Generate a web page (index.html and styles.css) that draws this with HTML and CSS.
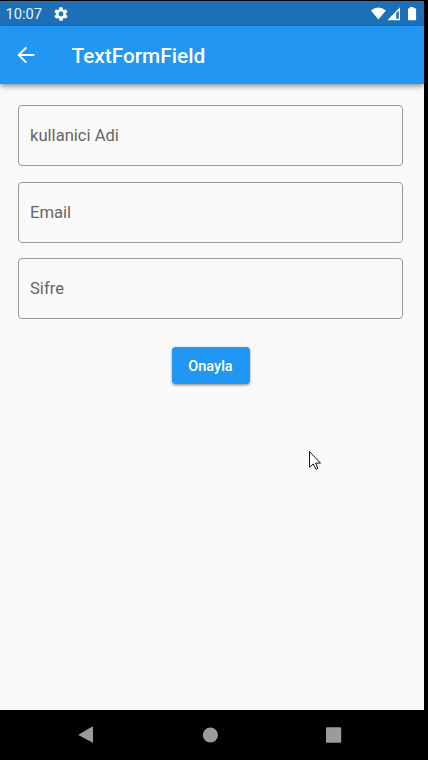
FILE: index.html
```html
<!DOCTYPE html>
<html lang="tr">
<head>
<meta charset="utf-8">
<title>TextFormField</title>
<link rel="stylesheet" href="styles.css">
</head>
<body>
<div class="device">
  <div class="screen">
    <div class="status">
      <span class="clock">10:07</span>
      <svg class="gear" width="16" height="16" viewBox="0 0 24 24"><path fill="#fff" fill-rule="evenodd" d="M19.4 13c0-.3.1-.6.1-1s0-.7-.1-1l2.100-1.600c.2-.2.3-.4.100-.600l-2-3.500c-.1-.2-.4-.3-.6-.2l-2.500 1c-.5-.4-1.100-.7-1.700-1L14.400 2.400c0-.2-.2-.4-.5-.4h-4c-.2 0-.4.2-.5.4L9 5.100c-.6.2-1.200.6-1.700 1l-2.500-1c-.2-.1-.5 0-.6.2l-2 3.500c-.1.2-.1.500.1.600L4.500 11c0 .3-.1.600-.1 1s0 .7.1 1l-2.100 1.600c-.2.200-.3.400-.1.600l2 3.500c.1.200.4.300.6.200l2.500-1c.5.400 1.100.7 1.700 1l.4 2.700c0 .2.200.4.500.4h4c.2 0 .5-.2.500-.4l.4-2.700c.6-.2 1.200-.6 1.700-1l2.500 1c.2.100.5 0 .6-.2l2-3.500c.1-.2.1-.5-.1-.6L19.400 13zM12 15.600a3.600 3.600 0 1 1 0-7.200 3.600 3.600 0 0 1 0 7.200z"/></svg>
      <svg class="signals" width="48" height="16" viewBox="0 0 48 16"><path fill="#fff" d="M0.900 4.500Q8.400 -1.500 15.900 4.500L8.400 13.500z"/><path fill="#fff" fill-rule="evenodd" d="M30 1.300V14.200H17.300zM28.800 4.500L26.200 7V12.800H28.800z"/><path fill="#fff" d="M39.900 1h3.700v1.300h1.800q.7 0 .7.700v10.500q0 .7-.7.700h-6.700q-.7 0-.7-.7V3q0-.7.700-.7h1.200z"/></svg>
    </div>
    <header class="appbar">
      <svg class="back" width="18" height="18" viewBox="0 0 18 18"><path fill="none" stroke="#fff" stroke-width="2" d="M17.400 9H2.200M9.300 1.400L1.700 9l7.600 7.600"/></svg>
      <h1 class="title">TextFormField</h1>
    </header>
    <main class="form">
      <div class="field"><span>kullanici Adi</span></div>
      <div class="field"><span>Email</span></div>
      <div class="field"><span>Sifre</span></div>
      <button class="submit">Onayla</button>
    </main>
  </div>
  <nav class="navbar">
    <svg width="16" height="18" viewBox="0 0 16 18"><path fill="#9b9b9b" d="M.8 8.400L14.300.600Q15 .400 15 1V16.400Q15 17 14.300 16.600L.8 9.200Q.3 8.800.8 8.400z"/></svg>
    <svg width="16" height="16" viewBox="0 0 16 16"><circle cx="8.400" cy="8" r="7.600" fill="#9b9b9b"/></svg>
    <svg width="16" height="16" viewBox="0 0 16 16"><rect x="0" y=".2" width="15.200" height="15.600" rx="1" fill="#9b9b9b"/></svg>
  </nav>
  <svg class="cursor" width="14" height="21" viewBox="0 0 14 21"><path fill="#fff" stroke="#111" stroke-width="1" d="M1.500 1.500V17.300L5.200 13.900L7.700 19Q9.300 19.600 9.800 18.200L7.600 13.100H12.500z"/></svg>
</div>
</body>
</html>
```

FILE: styles.css
```css
* {
  box-sizing: border-box;
}

body {
  margin: 0;
  background: #000;
  font-family: Roboto, "Liberation Sans", sans-serif;
}

.device {
  position: relative;
  display: flex;
  flex-direction: column;
  width: 428px;
  height: 760px;
  padding-top: 1px;
  overflow: hidden;
  background: #000;
}

.screen {
  display: flex;
  flex-direction: column;
  width: 424px;
  height: 709px;
  overflow: hidden;
  background: #fafafa;
}

.status {
  display: flex;
  align-items: center;
  flex: 0 0 25px;
  padding: 0 6px 0 5.500px;
  background: #1b70b7;
}

.clock {
  width: 47.500px;
  color: #e9f2fa;
  font-size: 14.700px;
  line-height: 24px;
  padding-top: 1px;
}

.signals {
  margin-left: auto;
}

.appbar {
  display: flex;
  align-items: center;
  flex: 0 0 58px;
  padding-left: 17px;
  background: #2196f3;
  box-shadow: 0 2px 4px rgba(0, 0, 0, .3), 0 4px 6px rgba(0, 0, 0, .13);
}

.title {
  margin: 2px 0 0 36.500px;
  color: #fff;
  font-size: 20.800px;
  font-weight: 500;
  line-height: 24px;
}

.form {
  display: flex;
  flex-direction: column;
  align-items: center;
  padding: 21px 21px 0 18px;
}

.field {
  display: flex;
  align-items: center;
  width: 385px;
  height: 61px;
  margin-bottom: 15.700px;
  padding: 0 11px;
  border: 1px solid #999;
  border-radius: 4px;
  color: #666;
  font-size: 16.600px;
}

.submit {
  width: 78px;
  height: 37px;
  margin-top: 12px;
  padding: 1px 0 0;
  border: 0;
  border-radius: 4px;
  background: #2196f3;
  box-shadow: 0 1px 3px rgba(0, 0, 0, .3), 0 2px 2px rgba(0, 0, 0, .14);
  color: #fff;
  font: 500 14.500px Roboto, "Liberation Sans", sans-serif;
}

.navbar {
  display: flex;
  align-items: center;
  justify-content: space-between;
  width: 264px;
  height: 50px;
  margin-left: 78px;
}

.cursor {
  position: absolute;
  left: 308px;
  top: 450px;
}
```
